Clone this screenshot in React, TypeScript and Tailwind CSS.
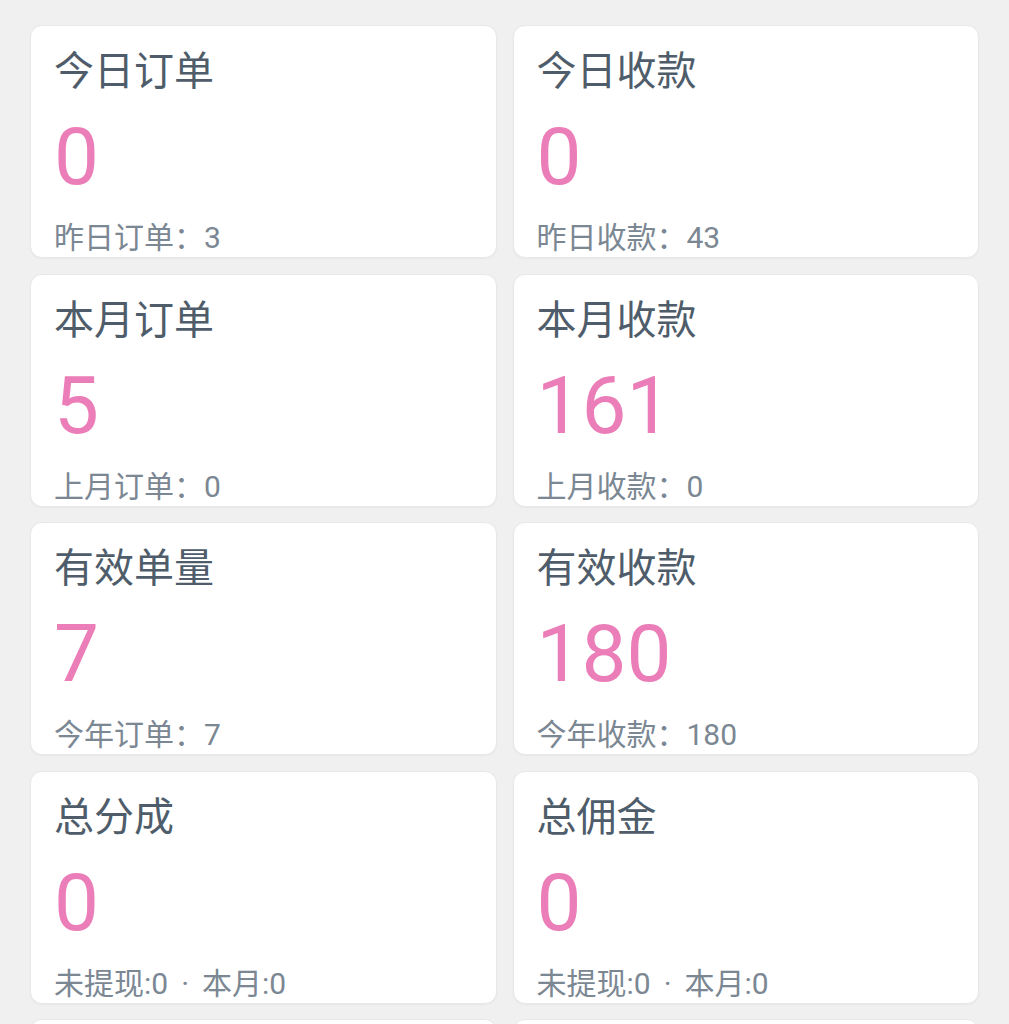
import React from "react";

type Item = { title: string; value: string; sub: React.ReactNode };

const dot = <span className="mx-[13px]">·</span>;

const items: Item[] = [
  { title: "今日订单", value: "0", sub: <span>昨日订单：3</span> },
  { title: "今日收款", value: "0", sub: <span>昨日收款：43</span> },
  { title: "本月订单", value: "5", sub: <span>上月订单：0</span> },
  { title: "本月收款", value: "161", sub: <span>上月收款：0</span> },
  { title: "有效单量", value: "7", sub: <span>今年订单：7</span> },
  { title: "有效收款", value: "180", sub: <span>今年收款：180</span> },
  { title: "总分成", value: "0", sub: <><span>未提现:0</span>{dot}<span>本月:0</span></> },
  { title: "总佣金", value: "0", sub: <><span>未提现:0</span>{dot}<span>本月:0</span></> },
];

function Card({ item }: { item: Item }) {
  return (
    <div className="h-[233px] rounded-[12px] bg-white border border-[#e6e8ea] shadow-[0_1px_2px_rgba(0,0,0,0.04)] flex flex-col px-[23px] pt-[22px] overflow-hidden">
      <div
        className="text-[40px] leading-[40px] text-[#4f5d6b]"
        style={{ fontFamily: "'Noto Sans CJK SC', sans-serif" }}
      >
        {item.title}
      </div>
      <div
        className="mt-[29px] text-[80px] leading-[80px] text-[#eb7eb8]"
        style={{ fontFamily: "Roboto, 'Noto Sans CJK SC', sans-serif" }}
      >
        {item.value}
      </div>
      <div
        className="mt-[26px] text-[30px] leading-[30px] text-[#7b8793] whitespace-nowrap"
        style={{ fontFamily: "Roboto, 'Noto Sans CJK SC', sans-serif" }}
      >
        {item.sub}
      </div>
    </div>
  );
}

export default function App() {
  return (
    <div className="bg-[#f0f0f0] pt-[25px] pl-[30px] pr-[30px] overflow-hidden h-[1024px]">
      <div className="grid grid-cols-2 gap-x-[16px] gap-y-[15.5px]">
        {items.map((it, i) => (
          <Card key={i} item={it} />
        ))}
        <div className="h-[233px] rounded-[12px] bg-white border border-[#e6e8ea]" />
        <div className="h-[233px] rounded-[12px] bg-white border border-[#e6e8ea]" />
      </div>
    </div>
  );
}
